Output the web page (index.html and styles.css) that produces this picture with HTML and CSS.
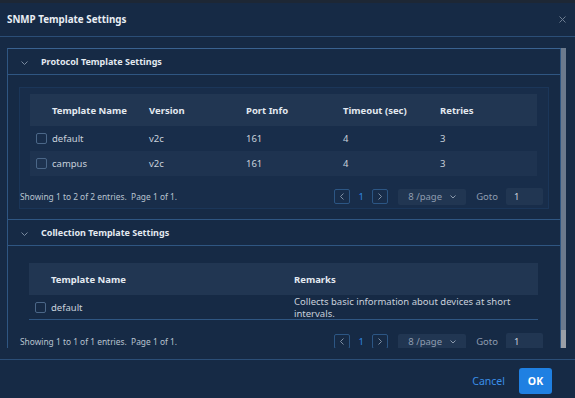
FILE: index.html
```html
<!DOCTYPE html>
<html lang="en">
<head>
    <meta charset="UTF-8">
    <title>SNMP Template Settings</title>
    <link rel="stylesheet" href="styles.css">
</head>
<body>
    <div class="modal">
        <div class="modal-header">
            <span class="modal-title">SNMP Template Settings</span>
            <svg class="close" width="7" height="7" viewBox="0 0 7 7"><path d="M0.5 0.5L6.5 6.5M6.5 0.5L0.5 6.5" stroke="#6d7d91" stroke-width="1"/></svg>
        </div>

        <div class="modal-body">
            <div class="scroll">
                <div class="panel">
                    <!-- Protokoll-Vorlagen -->
                    <div class="panel-head">
                        <svg class="chev" width="7" height="4" viewBox="0 0 7 4"><path d="M0.5 0.5L3.5 3.5L6.5 0.5" fill="none" stroke="#7a8ba0" stroke-width="1"/></svg>
                        <span>Protocol Template Settings</span>
                    </div>
                    <div class="panel-content">
                        <div class="table-box">
                            <table class="grid">
                                <thead>
                                    <tr>
                                        <th class="col-check"></th>
                                        <th>Template Name</th>
                                        <th>Version</th>
                                        <th>Port Info</th>
                                        <th>Timeout (sec)</th>
                                        <th>Retries</th>
                                    </tr>
                                </thead>
                                <tbody>
                                    <tr>
                                        <td class="col-check"><span class="check"></span></td>
                                        <td>default</td>
                                        <td>v2c</td>
                                        <td>161</td>
                                        <td>4</td>
                                        <td>3</td>
                                    </tr>
                                    <tr class="stripe">
                                        <td class="col-check"><span class="check"></span></td>
                                        <td>campus</td>
                                        <td>v2c</td>
                                        <td>161</td>
                                        <td>4</td>
                                        <td>3</td>
                                    </tr>
                                </tbody>
                            </table>
                            <div class="pager">
                                <span class="pager-info">Showing 1 to 2 of 2 entries.&nbsp; Page 1 of 1.</span>
                                <span class="page-btn"><svg width="4" height="7" viewBox="0 0 4 7"><path d="M3.5 0.5L0.5 3.5L3.5 6.5" fill="none" stroke="#7f8fa3"/></svg></span>
                                <span class="page-num">1</span>
                                <span class="page-btn"><svg width="4" height="7" viewBox="0 0 4 7"><path d="M0.5 0.5L3.5 3.5L0.5 6.5" fill="none" stroke="#7f8fa3"/></svg></span>
                                <span class="page-size">8 /page <svg width="6" height="4" viewBox="0 0 6 4"><path d="M0.5 0.5L3 3L5.5 0.5" fill="none" stroke="#8d9bad"/></svg></span>
                                <span class="goto">Goto</span>
                                <span class="goto-input">1</span>
                            </div>
                        </div>
                    </div>

                    <!-- Sammel-Vorlagen -->
                    <div class="panel-head second">
                        <svg class="chev" width="7" height="4" viewBox="0 0 7 4"><path d="M0.5 0.5L3.5 3.5L6.5 0.5" fill="none" stroke="#7a8ba0" stroke-width="1"/></svg>
                        <span>Collection Template Settings</span>
                    </div>
                    <div class="panel-content">
                        <div class="table-box plain">
                            <table class="grid collect">
                                <thead>
                                    <tr>
                                        <th class="col-check"></th>
                                        <th class="col-name">Template Name</th>
                                        <th>Remarks</th>
                                    </tr>
                                </thead>
                                <tbody>
                                    <tr class="lined">
                                        <td class="col-check"><span class="check"></span></td>
                                        <td>default</td>
                                        <td><div class="remarks">Collects basic information about devices at short intervals.</div></td>
                                    </tr>
                                </tbody>
                            </table>
                            <div class="pager">
                                <span class="pager-info">Showing 1 to 1 of 1 entries.&nbsp; Page 1 of 1.</span>
                                <span class="page-btn"><svg width="4" height="7" viewBox="0 0 4 7"><path d="M3.5 0.5L0.5 3.5L3.5 6.5" fill="none" stroke="#7f8fa3"/></svg></span>
                                <span class="page-num">1</span>
                                <span class="page-btn"><svg width="4" height="7" viewBox="0 0 4 7"><path d="M0.5 0.5L3.5 3.5L0.5 6.5" fill="none" stroke="#7f8fa3"/></svg></span>
                                <span class="page-size">8 /page <svg width="6" height="4" viewBox="0 0 6 4"><path d="M0.5 0.5L3 3L5.5 0.5" fill="none" stroke="#8d9bad"/></svg></span>
                                <span class="goto">Goto</span>
                                <span class="goto-input">1</span>
                            </div>
                        </div>
                    </div>
                </div>
            </div>
            <!-- Scrollleiste -->
            <div class="scrollbar">
                <div class="scrollbar-thumb"></div>
            </div>
        </div>

        <div class="modal-footer">
            <button class="btn-cancel">Cancel</button>
            <button class="btn-ok">OK</button>
        </div>
    </div>
</body>
</html>
```

FILE: styles.css
```css
html, body {
    margin: 0;
    height: 100%;
    background-color: #1d2735;
    font-family: "Noto Sans", "Open Sans", sans-serif;
    color: #c9d1dc;
    overflow: hidden;
}
.modal {
    margin-top: 3px;
    height: 395px;
    background-color: #162a45;
    display: flex;
    flex-direction: column;
}
.modal-header {
    height: 33px;
    border-bottom: 1px solid #2b4e77;
    display: flex;
    align-items: center;
    justify-content: space-between;
    padding: 0 9px 0 7px;
}
.modal-title {
    font-size: 9.8px;
    font-weight: bold;
    color: #e9eef4;
}
.modal-body {
    display: flex;
    padding: 11px 9px 11px 7px;
}
.scroll {
    flex: 1;
    height: 300px;
    overflow: hidden;
}
.scrollbar {
    width: 5px;
    height: 300px;
    background-color: #9a9fa7;
}
.scrollbar-thumb {
    height: 282px;
    background-color: #6c7a8d;
}
.panel {
    border: 1px solid #2f5682;
    border-top-color: #3a6290;
}
.panel-head {
    height: 25px;
    display: flex;
    align-items: center;
    border-bottom: 1px solid #2f5682;
    font-size: 9px;
    font-weight: bold;
    color: #e3e9f0;
}
.panel-head.second {
    border-top: 1px solid #2f5682;
}
.chev {
    margin: 2px 13px 0 13px;
}
.panel-content {
    padding: 12px 11px 10px 11px;
}
.table-box {
    border: 1px solid #1b3659;
    background-color: #182d4a;
    padding: 6px 5px 3px 0;
}
.table-box.plain {
    border-color: transparent;
    background-color: transparent;
    padding: 4px 5px 0 0;
}
.grid {
    border-collapse: collapse;
    margin-left: 10px;
    width: 507px;
    table-layout: fixed;
    font-size: 9.5px;
}
.grid.collect {
    margin-left: 9px;
    width: 509px;
}
.grid th {
    height: 32px;
    padding: 0;
    text-align: left;
    font-weight: bold;
    color: #e3e9f0;
    background-color: #213652;
}
.grid td {
    height: 25px;
    padding: 0;
}
.grid .col-check {
    width: 22px;
}
.grid.collect .col-name {
    width: 243px;
}
.grid tr.stripe td {
    background-color: #1e3350;
}
.grid tr.lined td {
    height: 24px;
    border-bottom: 1px solid #2f5682;
}
.remarks {
    line-height: 12px;
    height: 24px;
    overflow: hidden;
    padding-top: 1px;
    box-sizing: border-box;
}
.check {
    display: block;
    width: 9px;
    height: 9px;
    margin-left: 6px;
    border: 1px solid #4b6788;
    border-radius: 2px;
}
.pager {
    display: flex;
    align-items: center;
    height: 17px;
    margin-top: 12px;
    font-size: 8.4px;
}
.table-box.plain .pager {
    margin-top: 13px;
}
.pager-info {
    flex: 1;
    color: #b9c3cf;
}
.page-btn {
    width: 14px;
    height: 13px;
    border: 1px solid #2c5684;
    border-radius: 2px;
    display: flex;
    align-items: center;
    justify-content: center;
}
.page-num {
    color: #2f86e0;
    font-size: 9.5px;
    width: 22px;
    text-align: center;
}
.page-size {
    margin-left: 10px;
    width: 68px;
    height: 16px;
    background-color: #213652;
    border-radius: 2px;
    color: #8f9db0;
    font-size: 9.5px;
    display: flex;
    align-items: center;
    justify-content: center;
    gap: 8px;
}
.goto {
    margin-left: 10px;
    color: #8f9db0;
    font-size: 9.5px;
}
.goto-input {
    margin-left: 8px;
    width: 29px;
    height: 17px;
    padding-left: 8px;
    background-color: #213652;
    border-radius: 2px;
    line-height: 17px;
    font-size: 9.5px;
    color: #c9d1dc;
}
.modal-footer {
    flex: 1;
    border-top: 1px solid #2b4e77;
    display: flex;
    justify-content: flex-end;
    align-items: flex-start;
    padding: 8px 23px 0 0;
    gap: 14px;
}
.modal-footer button {
    font-family: "Noto Sans", "Open Sans", sans-serif;
    font-size: 10.5px;
    border: none;
    cursor: pointer;
}
.btn-cancel {
    background: none;
    color: #3a8fe8;
    height: 26px;
    padding: 0;
}
.btn-ok {
    width: 33px;
    height: 26px;
    background-color: #1f80e2;
    color: #ffffff;
    font-weight: bold;
    border-radius: 3px;
}
```
